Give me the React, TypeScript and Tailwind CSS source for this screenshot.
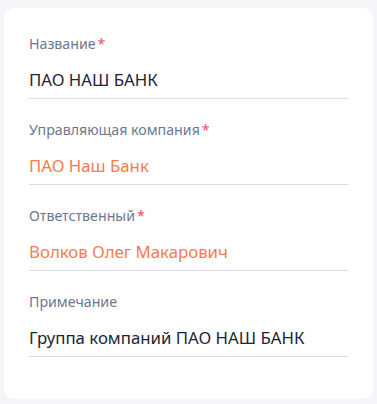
import React from "react";

const fields = [
  { label: "Название", required: true, value: "ПАО НАШ БАНК", accent: false },
  { label: "Управляющая компания", required: true, value: "ПАО Наш Банк", accent: true },
  { label: "Ответственный", required: true, value: "Волков Олег Макарович", accent: true },
  { label: "Примечание", required: false, value: "Группа компаний ПАО НАШ БАНК", accent: false },
];

export default function App() {
  return (
    <div
      className="w-[377px] h-[404px] bg-[#f4f5f9] pt-[8px] pl-[4px]"
      style={{ fontFamily: '"Noto Sans", "Open Sans", sans-serif' }}
    >
      <div className="w-[369px] h-[391px] bg-white rounded-[10px] pl-[25px] pr-[24px] pt-[26px] flex flex-col gap-[21px]">
        {fields.map((f) => (
          <div key={f.label} className="flex flex-col">
            <div className="text-[14.2px] leading-[20px] text-[#6b7890] flex items-start">
              <span>{f.label}</span>
              {f.required && <span className="text-[#ef4b61] ml-[2px]">*</span>}
            </div>
            <div
              className={
                "text-[16.8px] leading-[22px] mt-[15px] pb-[7px] border-b border-[#dcdde4] " +
                (f.accent ? "text-[#fa7a4e]" : "text-[#1e2433]")
              }
            >
              {f.value}
            </div>
          </div>
        ))}
      </div>
    </div>
  );
}
